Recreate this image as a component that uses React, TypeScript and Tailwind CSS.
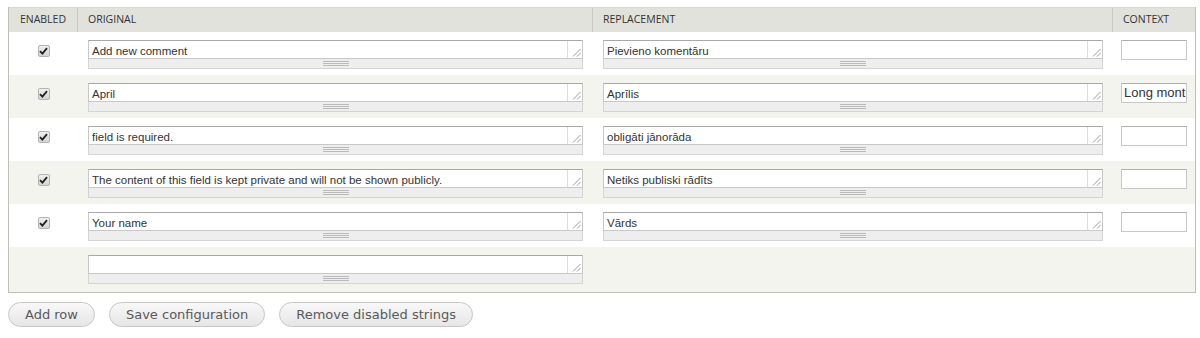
import React from "react";

const rows = [
  { orig: "Add new comment", repl: "Pievieno komentāru", ctx: "" },
  { orig: "April", repl: "Aprīlis", ctx: "Long month" },
  { orig: "field is required.", repl: "obligāti jānorāda", ctx: "" },
  { orig: "The content of this field is kept private and will not be shown publicly.", repl: "Netiks publiski rādīts", ctx: "" },
  { orig: "Your name", repl: "Vārds", ctx: "" },
];

function Grip() {
  return (
    <div className="h-[10px] bg-[#eeeeee] border border-t-0 border-[#d4d4d4] flex items-center justify-center">
      <div className="w-[26px] flex flex-col gap-[1px]">
        <div className="h-px bg-[#bbbbbb]" />
        <div className="h-px bg-[#bbbbbb]" />
        <div className="h-px bg-[#bbbbbb]" />
      </div>
    </div>
  );
}

function TextArea({ value }: { value: string }) {
  return (
    <div className="w-full">
      <div className="relative h-[19px] bg-white border border-[#c8c8c8] border-t-[#a8a8a8] pt-[3px] pl-[3px] text-[11.5px] leading-[14px] text-[#333] font-['Liberation_Sans',Arial,sans-serif] overflow-hidden whitespace-nowrap">
        <span>{value}</span>
        <div className="absolute right-0 top-0 bottom-0 w-[15px] border-l border-[#dddddd] bg-white">
          <svg className="absolute right-[1px] bottom-[1px]" width="9" height="9" viewBox="0 0 9 9">
            <line x1="8.5" y1="1" x2="1" y2="8.5" stroke="#999" strokeWidth="1" />
            <line x1="8.5" y1="5" x2="5" y2="8.5" stroke="#999" strokeWidth="1" />
          </svg>
        </div>
      </div>
      <Grip />
    </div>
  );
}

function Check() {
  return (
    <div className="w-[12px] h-[12px] rounded-[2px] border border-[#b4b4b4] bg-gradient-to-b from-[#f0f0f0] to-[#d4d4d4] flex items-center justify-center">
      <svg width="9" height="8" viewBox="0 0 9 8">
        <path d="M1 4.2 L3.4 6.6 L8 1.2" fill="none" stroke="#222" strokeWidth="1.8" />
      </svg>
    </div>
  );
}

function Button({ children }: { children: React.ReactNode }) {
  return (
    <div className="h-[25px] px-[16px] rounded-full border border-[#c7c7c7] bg-gradient-to-b from-[#f8f8f8] to-[#e6e6e6] flex items-center text-[13px] text-[#5a5a5a] font-['DejaVu_Sans',Verdana,sans-serif]">
      {children}
    </div>
  );
}

export default function App() {
  return (
    <div className="w-[1200px] h-[338px] bg-white pt-[7px] px-[8px]">
      <div className="w-[1188px] border border-[#bebfb9] border-t-0">
        <div className="grid grid-cols-[69px_515px_520px_1fr] h-[25px] bg-[#e1e2dc] border-t border-[#d8d9d3] text-[10.5px] text-[#333] font-['Open_Sans',sans-serif] uppercase items-center">
          <div className="h-full flex items-center justify-center border-r border-[#c9cac4]">Enabled</div>
          <div className="h-full flex items-center pl-[10px] border-r border-[#c9cac4]">Original</div>
          <div className="h-full flex items-center pl-[10px] border-r border-[#c9cac4]">Replacement</div>
          <div className="h-full flex items-center pl-[10px]">Context</div>
        </div>
        {rows.map((r, i) => (
          <div
            key={i}
            className={`grid grid-cols-[69px_515px_520px_1fr] h-[43px] pt-[8px] ${i % 2 === 1 ? "bg-[#f3f4ee]" : "bg-white"}`}
          >
            <div className="flex justify-center pt-[5px]">
              <Check />
            </div>
            <div className="px-[10px]">
              <TextArea value={r.orig} />
            </div>
            <div className="px-[10px]">
              <TextArea value={r.repl} />
            </div>
            <div className="pl-[8px] pr-[10px]">
              <div className="w-[66px] h-[20px] bg-white border border-[#c8c8c8] border-t-[#b0b0b0] flex items-center pl-[2px] text-[13px] text-[#333] font-['Liberation_Sans',Arial,sans-serif] overflow-hidden whitespace-nowrap">
                {r.ctx}
              </div>
            </div>
          </div>
        ))}
        <div className="grid grid-cols-[69px_515px_520px_1fr] h-[45px] pt-[8px] bg-[#f3f4ee]">
          <div />
          <div className="px-[10px]">
            <TextArea value="" />
          </div>
          <div />
          <div />
        </div>
      </div>
      <div className="flex gap-[14px] mt-[9px]">
        <Button>Add row</Button>
        <Button>Save configuration</Button>
        <Button>Remove disabled strings</Button>
      </div>
    </div>
  );
}
